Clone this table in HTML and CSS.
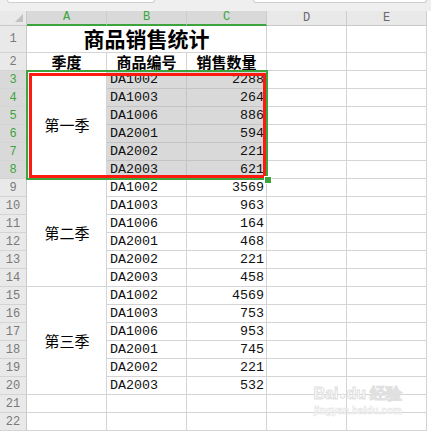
FILE: index.html
```html
<!DOCTYPE html>
<html lang="zh">
<head>
<meta charset="utf-8">
<link rel="stylesheet" href="styles.css">
</head>
<body>
<div class="topbar">
  <div class="box box1"></div>
  <div class="box box2"></div>
</div>
<div class="sheet-wrap">
  <div class="sheet">
    <div class="corner"><span class="tri"></span></div>
    <div class="ch sel">A</div>
    <div class="ch sel">B</div>
    <div class="ch sel">C</div>
    <div class="ch">D</div>
    <div class="ch">E</div>

    <div class="rh r1">1</div>
    <div class="c title">商品销售统计</div>
    <div class="c r1"></div><div class="c r1"></div>

    <div class="rh">2</div>
    <div class="c head">季度</div>
    <div class="c head">商品编号</div>
    <div class="c head">销售数量</div>
    <div class="c"></div><div class="c"></div>

    <div class="rh rsel">3</div>
    <div class="c season">第一季</div>
    <div class="c code hl">DA1002</div><div class="c num hl">2288</div><div class="c"></div><div class="c"></div>
    <div class="rh rsel">4</div>
    <div class="c code hl">DA1003</div><div class="c num hl">264</div><div class="c"></div><div class="c"></div>
    <div class="rh rsel">5</div>
    <div class="c code hl">DA1006</div><div class="c num hl">886</div><div class="c"></div><div class="c"></div>
    <div class="rh rsel">6</div>
    <div class="c code hl">DA2001</div><div class="c num hl">594</div><div class="c"></div><div class="c"></div>
    <div class="rh rsel">7</div>
    <div class="c code hl">DA2002</div><div class="c num hl">221</div><div class="c"></div><div class="c"></div>
    <div class="rh rsel">8</div>
    <div class="c code hl">DA2003</div><div class="c num hl">621</div><div class="c"></div><div class="c"></div>

    <div class="rh">9</div>
    <div class="c season">第二季</div>
    <div class="c code">DA1002</div><div class="c num">3569</div><div class="c"></div><div class="c"></div>
    <div class="rh">10</div>
    <div class="c code">DA1003</div><div class="c num">963</div><div class="c"></div><div class="c"></div>
    <div class="rh">11</div>
    <div class="c code">DA1006</div><div class="c num">164</div><div class="c"></div><div class="c"></div>
    <div class="rh">12</div>
    <div class="c code">DA2001</div><div class="c num">468</div><div class="c"></div><div class="c"></div>
    <div class="rh">13</div>
    <div class="c code">DA2002</div><div class="c num">221</div><div class="c"></div><div class="c"></div>
    <div class="rh">14</div>
    <div class="c code">DA2003</div><div class="c num">458</div><div class="c"></div><div class="c"></div>

    <div class="rh">15</div>
    <div class="c season">第三季</div>
    <div class="c code">DA1002</div><div class="c num">4569</div><div class="c"></div><div class="c"></div>
    <div class="rh">16</div>
    <div class="c code">DA1003</div><div class="c num">753</div><div class="c"></div><div class="c"></div>
    <div class="rh">17</div>
    <div class="c code">DA1006</div><div class="c num">953</div><div class="c"></div><div class="c"></div>
    <div class="rh">18</div>
    <div class="c code">DA2001</div><div class="c num">745</div><div class="c"></div><div class="c"></div>
    <div class="rh">19</div>
    <div class="c code">DA2002</div><div class="c num">221</div><div class="c"></div><div class="c"></div>
    <div class="rh">20</div>
    <div class="c code">DA2003</div><div class="c num">532</div><div class="c"></div><div class="c"></div>

    <div class="rh">21</div>
    <div class="c"></div><div class="c"></div><div class="c"></div><div class="c"></div><div class="c"></div>
    <div class="rh">22</div>
    <div class="c"></div><div class="c"></div><div class="c"></div><div class="c"></div><div class="c"></div>
  </div>

  <div class="sel-green"></div>
  <div class="sel-red"></div>
  <div class="handle"></div>
  <div class="watermark">
    <div class="wm-main">Bai<span class="paw">●</span>du 经验</div>
    <div class="wm-sub">jingyan.baidu.com</div>
  </div>
</div>
</body>
</html>
```

FILE: styles.css
```css
html, body {
  margin: 0;
  padding: 0;
  background: #ffffff;
}
body {
  width: 431px;
  height: 431px;
  overflow: hidden;
  font-family: "Liberation Mono", monospace;
}
.topbar {
  height: 11px;
  background: #efefef;
  display: flex;
  gap: 98px;
  padding-left: 7px;
  box-sizing: border-box;
}
.box {
  height: 2px;
  background: #ffffff;
  border: 1px solid #cfcfcf;
  border-top: none;
  border-radius: 0 0 5px 5px;
}
.box1 { width: 146px; }
.box2 { width: 172px; }

.sheet-wrap {
  position: relative;
}
.sheet {
  display: grid;
  grid-template-columns: 27px repeat(5, 80px);
  grid-template-rows: 15px 27px repeat(21, 18px);
  background: #ffffff;
}
.corner {
  background: #e9e9e9;
  border-right: 1px solid #c9c9c9;
  border-bottom: 1px solid #c9c9c9;
  box-sizing: border-box;
  position: relative;
}
.tri {
  position: absolute;
  right: 3px;
  bottom: 3px;
  width: 0;
  height: 0;
  border-left: 8px solid transparent;
  border-bottom: 8px solid #c2c2c2;
}
.ch {
  background: #e9e9e9;
  border-right: 1px solid #cdcdcd;
  border-bottom: 1px solid #c9c9c9;
  box-sizing: border-box;
  color: #6a6a6a;
  font-family: "Liberation Mono", monospace;
  font-size: 12px;
  line-height: 14px;
  text-align: center;
}
.ch.sel {
  background: #d9d9d9;
  color: #3da43d;
  border-bottom: 2px solid #3da43d;
  line-height: 13px;
}
.rh {
  background: #e9e9e9;
  border-right: 1px solid #c9c9c9;
  border-bottom: 1px solid #d4d4d4;
  box-sizing: border-box;
  color: #7a7a7a;
  font-family: "Liberation Mono", monospace;
  font-size: 12px;
  display: flex;
  align-items: center;
  justify-content: center;
}
.rh.rsel {
  background: #d9d9d9;
  color: #3da43d;
}
.c {
  border-right: 1px solid #d4d4d4;
  border-bottom: 1px solid #d4d4d4;
  box-sizing: border-box;
  display: flex;
  align-items: center;
  color: #111111;
  font-size: 13.33px;
  line-height: 16px;
  white-space: nowrap;
  min-width: 0;
}
.title {
  grid-column: span 3;
  justify-content: center;
  font-family: "Noto Sans CJK SC", sans-serif;
  font-weight: bold;
  font-size: 21px;
  line-height: 21px;
  color: #000000;
  padding-bottom: 2px;
}
.head {
  justify-content: center;
  font-family: "Noto Sans CJK SC", sans-serif;
  font-weight: bold;
  font-size: 15px;
  line-height: 16px;
  color: #000000;
}
.season {
  grid-row: span 6;
  justify-content: center;
  font-family: "Noto Sans CJK SC", sans-serif;
  font-size: 15px;
  color: #000000;
  padding-left: 1px;
}
.code {
  padding-left: 3px;
  font-family: "Liberation Mono", monospace;
}
.num {
  justify-content: flex-end;
  padding-right: 2px;
  font-family: "Liberation Mono", monospace;
}
.hl {
  background: #d9d9d9;
  border-bottom-color: #c4c4c4;
  border-right-color: #c4c4c4;
}

.sel-green {
  position: absolute;
  left: 26px;
  top: 59px;
  width: 242px;
  height: 110px;
  border: 2px solid #3da43d;
  box-sizing: border-box;
}
.sel-red {
  position: absolute;
  left: 29px;
  top: 62px;
  width: 237px;
  height: 105px;
  border: 3px solid #ff1a10;
  box-sizing: border-box;
}
.handle {
  position: absolute;
  left: 265px;
  top: 166px;
  width: 6px;
  height: 6px;
  background: #3da43d;
  border: 1px solid #ffffff;
  box-sizing: content-box;
  margin: -1px;
}
.watermark {
  position: absolute;
  left: 312px;
  top: 374px;
  width: 92px;
  font-family: "Liberation Sans", sans-serif;
  color: rgba(255, 255, 255, 0.9);
  -webkit-text-stroke: 1px #e0e0e0;
  text-align: center;
  pointer-events: none;
  white-space: nowrap;
}
.wm-main {
  font-size: 16px;
  font-weight: bold;
  line-height: 18px;
}
.paw {
  font-size: 10px;
  margin: 0 1px;
}
.wm-sub {
  font-size: 10px;
  font-weight: bold;
  line-height: 12px;
  -webkit-text-stroke: 0.5px #e0e0e0;
}
```
